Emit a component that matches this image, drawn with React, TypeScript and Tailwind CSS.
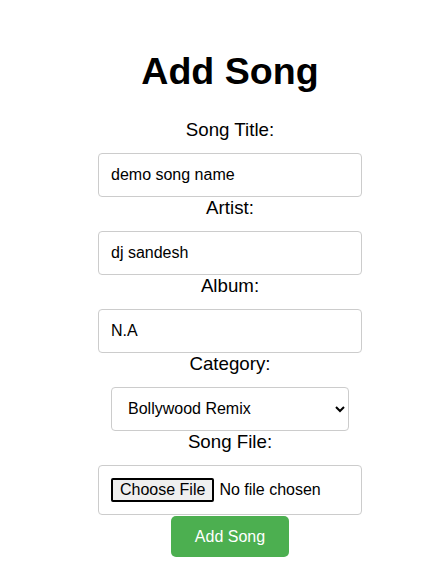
export default function App() {
  const label = "block text-[18.72px] leading-[21.7px] text-black";
  const field =
    "mt-[12px] w-[264px] rounded-[4px] border border-[#cccccc] bg-white p-[12px] text-[16px] leading-[18.4px] text-black outline-none";

  return (
    <div className="min-h-[580px] bg-white pl-[12px] font-['Liberation_Sans',Arial,sans-serif]">
      <div className="flex flex-col items-center text-center">
        <h1 className="mt-[50px] mb-[26px] text-[37.6px] font-bold leading-[43px] text-black">
          Add Song
        </h1>

        <label className={label}>Song Title:</label>
        <input type="text" defaultValue="demo song name" className={field} />

        <label className={label}>Artist:</label>
        <input type="text" defaultValue="dj sandesh" className={field} />

        <label className={label}>Album:</label>
        <input type="text" defaultValue="N.A" className={field} />

        <label className={label}>Category:</label>
        <select
          defaultValue="Bollywood Remix"
          className="mt-[12px] h-[44px] w-[238px] rounded-[4px] border border-[#cccccc] bg-white px-[12px] text-[16px] text-black"
        >
          <option>Bollywood Remix</option>
          <option>Hindi</option>
          <option>English</option>
        </select>

        <label className={label}>Song File:</label>
        <input
          type="file"
          className="mt-[12px] w-[264px] rounded-[4px] border border-[#cccccc] bg-white p-[12px] text-left text-[16px] leading-[18.4px] text-black file:mr-[5px] file:rounded-[2px] file:border-2 file:border-black file:bg-[#efefef] file:px-[7px] file:py-[1px] file:text-[16px] file:text-black"
        />

        <button
          type="submit"
          className="mt-[1px] h-[41px] rounded-[5px] bg-[#4caf50] px-[24px] text-[16px] text-white"
        >
          Add Song
        </button>
      </div>
    </div>
  );
}
